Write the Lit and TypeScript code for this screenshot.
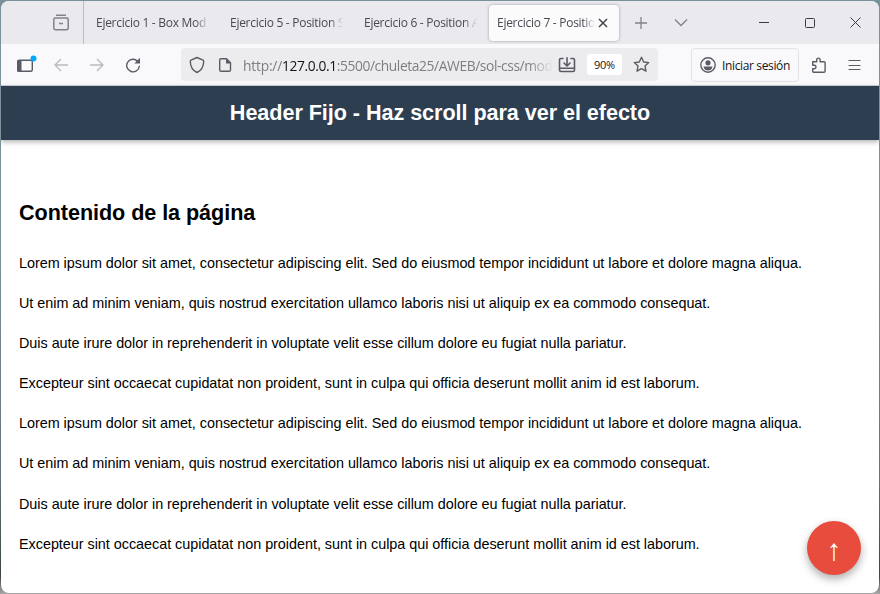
import { LitElement, html, css, svg } from "lit";
import { customElement } from "lit/decorators.js";

const icon = (cls: string, w: number, h: number, body: unknown) =>
  html`<svg class="icon ${cls}" width=${w} height=${h} viewBox="0 0 ${w} ${h}">${body}</svg>`;

const TABS = ["Ejercicio 1 - Box Mod", "Ejercicio 5 - Position S", "Ejercicio 6 - Position A"];

const PARAGRAPHS = [
  "Lorem ipsum dolor sit amet, consectetur adipiscing elit. Sed do eiusmod tempor incididunt ut labore et dolore magna aliqua.",
  "Ut enim ad minim veniam, quis nostrud exercitation ullamco laboris nisi ut aliquip ex ea commodo consequat.",
  "Duis aute irure dolor in reprehenderit in voluptate velit esse cillum dolore eu fugiat nulla pariatur.",
  "Excepteur sint occaecat cupidatat non proident, sunt in culpa qui officia deserunt mollit anim id est laborum.",
];

@customElement("browser-tabs")
class BrowserTabs extends LitElement {
  static styles = css`
    :host { display: flex; height: 43px; background: #eae9ee; align-items: center; color: #4a4953;
      font: 12px/20px "Open Sans", "Noto Sans", sans-serif; }
    .icon { flex: none; fill: none; stroke: #82818a; stroke-width: 1.3; }
    .recent { box-sizing: border-box; width: 83px; height: 43px; flex: none; display: flex; align-items: center; border-right: 1px solid #bdbcc3; padding-left: 51px; }
    .tab { box-sizing: border-box; flex: none; width: 134px; padding-left: 12px; display: flex; }
    .label { width: 113px; overflow: hidden; white-space: nowrap; letter-spacing: -0.28px;
      mask-image: linear-gradient(to right, #000 88%, transparent); }
    .active { width: 130px; height: 36px; margin-left: 3px; padding-left: 8px; align-items: center; background: #fbfbfc; border-radius: 4px;
      box-shadow: 0 0 3px rgba(60, 60, 80, 0.45); }
    .active .label { width: 98px; }
    .close { margin-left: 3px; stroke: #45444d; stroke-width: 1.5; }
    .plus { margin-left: 16px; }
    .chevron { margin-left: 27px; }
    .min { margin-left: 71px; }
    .max { margin-left: 36px; }
    .exit { margin-left: 35px; }
    .min, .max, .exit { stroke: #3b3a42; stroke-width: 1; }
  `;
  render() {
    return html`
      <div class="recent">${icon("", 18, 17, svg`<path stroke-width="1.5" d="M4 1.200h10M1.800 5.500q0-1.500 1.200-1.500h12q1.200 0 1.200 1.500v8.300q0 2-2 2H3.800q-2 0-2-2zM7 9.500h4"/>`)}</div>
      ${TABS.map((t) => html`<div class="tab"><span class="label">${t}</span></div>`)}
      <div class="tab active"><span class="label">Ejercicio 7 - Positio</span>${icon("close", 10, 10, svg`<path d="M1 1l8 8M9 1L1 9"/>`)}</div>
      ${icon("plus", 12, 12, svg`<path d="M6 0v12M0 6h12"/>`)}
      ${icon("chevron", 14, 9, svg`<path d="M1 1.500l6 6 6-6"/>`)}
      ${icon("min", 10, 10, svg`<path d="M0 4.500h10"/>`)}
      ${icon("max", 10, 10, svg`<rect x=".5" y=".5" width="9" height="9" rx="1"/>`)}
      ${icon("exit", 11, 11, svg`<path d="M.5.5l10 10M10.500.500l-10 10"/>`)}
    `;
  }
}

@customElement("browser-toolbar")
class BrowserToolbar extends LitElement {
  static styles = css`
    :host { display: flex; box-sizing: border-box; height: 42px; background: #f9f9fb; align-items: center; padding-left: 15px; border-bottom: 1px solid #cfd3d8;
      font: 12px/20px "Open Sans", "Noto Sans", sans-serif; }
    .icon { flex: none; fill: none; stroke: #5b5b66; stroke-width: 1.4; stroke-linejoin: round; stroke-linecap: round; }
    .solid { fill: #5b5b66; stroke: none; }
    .dot { fill: #00a8ff; stroke: none; }
    .faint { stroke: #b9b9be; }
    .back { margin-left: 17px; }
    .forward { margin-left: 22px; }
    .reload { margin-left: 21px; }
    .address { box-sizing: border-box; flex: none; width: 477px; height: 33px; margin-left: 40px; padding-left: 8px; background: #ececee; border-radius: 4px; display: flex; align-items: center; }
    .page { margin-left: 13px; }
    .url { width: 310px; margin-left: 11px; padding-top: 2px; overflow: hidden; white-space: nowrap; font-size: 13.8px; letter-spacing: -0.4px; color: #7d7d84;
      mask-image: linear-gradient(to right, #000 92%, transparent); }
    .scheme { letter-spacing: -0.2px; }
    .host { color: #15141a; }
    .save { margin-left: 5px; stroke-width: 1.6; }
    .zoom { width: 35px; height: 21px; line-height: 21px; margin-left: 11px; background: #fff; border-radius: 3px; text-align: center; font-size: 11px; letter-spacing: -0.3px; color: #15141a; }
    .star { margin-left: 11px; }
    .login { box-sizing: border-box; flex: none; width: 108px; height: 34px; margin-left: 33px; padding-left: 7px; display: flex; align-items: center; border: 1px solid #e2e2e6; border-radius: 4px; color: #15141a; white-space: nowrap; letter-spacing: -0.36px; }
    .login .icon { margin-right: 5px; }
    .login-text { padding-top: 2px; }
    .puzzle { margin-left: 12px; }
    .menu { margin-left: 21px; stroke-width: 1.2; }
  `;
  render() {
    return html`
      ${icon("", 21, 20, svg`<rect x="1.700" y="5.200" width="14.600" height="11" rx="1.5"/><path class="solid" d="M1 5.500h4.500v11.500H2.500Q1 17 1 15z"/><circle class="dot" cx="17.500" cy="3.500" r="3"/>`)}
      ${icon("back faint", 14, 14, svg`<path d="M13.500 7H1M6.500 1.500L1 7l5.500 5.500"/>`)}
      ${icon("forward faint", 14, 14, svg`<path d="M.5 7H13M7.500 1.500L13 7l-5.500 5.500"/>`)}
      ${icon("reload", 16, 16, svg`<path d="M12.600 4.200A6.300 6.300 0 1 0 14.300 9.200"/><path class="solid" d="M15 .8V6.500H9.300z"/>`)}
      <div class="address">
        ${icon("", 16, 18, svg`<path d="M8 1.500l6 2.700q.8.400.700 1.300Q14.500 13.500 8 16.500Q1.500 13.500 1.300 5.500q0-.9.700-1.300z"/>`)}
        ${icon("page", 14, 16, svg`<path d="M3 1.700h5.500l4 4v7.300q0 1.300-1.300 1.300H3q-1.300 0-1.300-1.300V3q0-1.300 1.300-1.300z"/><path class="solid" d="M8 1.500l5 5H8z"/>`)}
        <span class="url"><span class="scheme">http://</span><span class="host">127.0.0.1</span>:5500/chuleta25/AWEB/sol-css/mod</span>
        ${icon("save", 18, 16, svg`<path d="M5 1.500H3Q1.500 1.500 1.500 3v10q0 1.500 1.500 1.500h12q1.500 0 1.500-1.500V3q0-1.500-1.500-1.500h-2M1.500 11.200h15M9 .8v7.700M6 6l3 3 3-3"/>`)}
        <span class="zoom">90%</span>
        ${icon("star", 17, 17, svg`<path d="M8.500 1.300l2.200 4.700 5 .600-3.700 3.500 1 5.100-4.500-2.500L4 15.200l1-5.100L1.300 6.600l5-.600z"/>`)}
      </div>
      <div class="login">
        ${icon("", 18, 18, svg`<circle cx="9" cy="9" r="7.200"/><circle class="solid" cx="9" cy="6.800" r="2.600"/><path class="solid" d="M4.500 10.500h9q-.6 4-4.500 4t-4.500-4z"/>`)}<span class="login-text">Iniciar sesión</span>
      </div>
      ${icon("puzzle", 16, 18, svg`<path d="M1.700 5.700h4V3.800a1.700 1.700 0 0 1 3.400 0v1.900h4q1 0 1 1v8.500q0 1-1 1H2.700q-1 0-1-1v-2.500h1.600a1.700 1.700 0 0 0 0-3.400H1.700z"/>`)}
      ${icon("menu", 13, 12, svg`<path d="M1 1.500h11M1 6.500h11M1 10.500h11"/>`)}
    `;
  }
}

@customElement("app-root")
class AppRoot extends LitElement {
  static styles = css`
    :host { display: block; box-sizing: border-box; width: 880px; height: 594px; padding: 1px; overflow: hidden;
      background: linear-gradient(to bottom, #78929b 0, #7c929a 40%, #65747a 80%, #3c4444 97%, #a8a8a8); }
    .window { position: relative; display: flex; flex-direction: column; height: 592px; overflow: hidden; border-radius: 8px; background: #fff; }
    .header { flex: none; height: 54px; background: #2c3e50; box-shadow: 0 2px 5px rgba(0, 0, 0, 0.3); color: #fff; text-align: center; z-index: 1;
      font: bold 21.6px/54px "Liberation Sans", Arial, sans-serif; letter-spacing: -0.05px; }
    .content { padding: 60px 18px 0; color: #000; font: 14.4px/24px "Liberation Sans", Arial, sans-serif; letter-spacing: -0.028px; }
    .title { margin: 0; font-size: 21.6px; line-height: 26px; letter-spacing: -0.06px; }
    .text { margin: 0 0 16.1px; white-space: nowrap; }
    .title + .text { margin-top: 25px; }
    .top { position: absolute; right: 18px; bottom: 18px; width: 54px; height: 54px; border: 0; padding: 0; border-radius: 50%; background: #e74c3c;
      box-shadow: 0 4px 8px rgba(0, 0, 0, 0.32); display: flex; align-items: center; justify-content: center; }
    .arrow { color: #fff; font: 30px/50px "Liberation Sans", Arial, sans-serif; padding-top: 4px; }
  `;
  render() {
    return html`
      <div class="window">
        <browser-tabs></browser-tabs>
        <browser-toolbar></browser-toolbar>
        <header class="header">Header Fijo - Haz scroll para ver el efecto</header>
        <main class="content">
          <h2 class="title">Contenido de la página</h2>
          ${[...PARAGRAPHS, ...PARAGRAPHS].map((p) => html`<p class="text">${p}</p>`)}
        </main>
        <button class="top"><span class="arrow">↑</span></button>
      </div>
    `;
  }
}
